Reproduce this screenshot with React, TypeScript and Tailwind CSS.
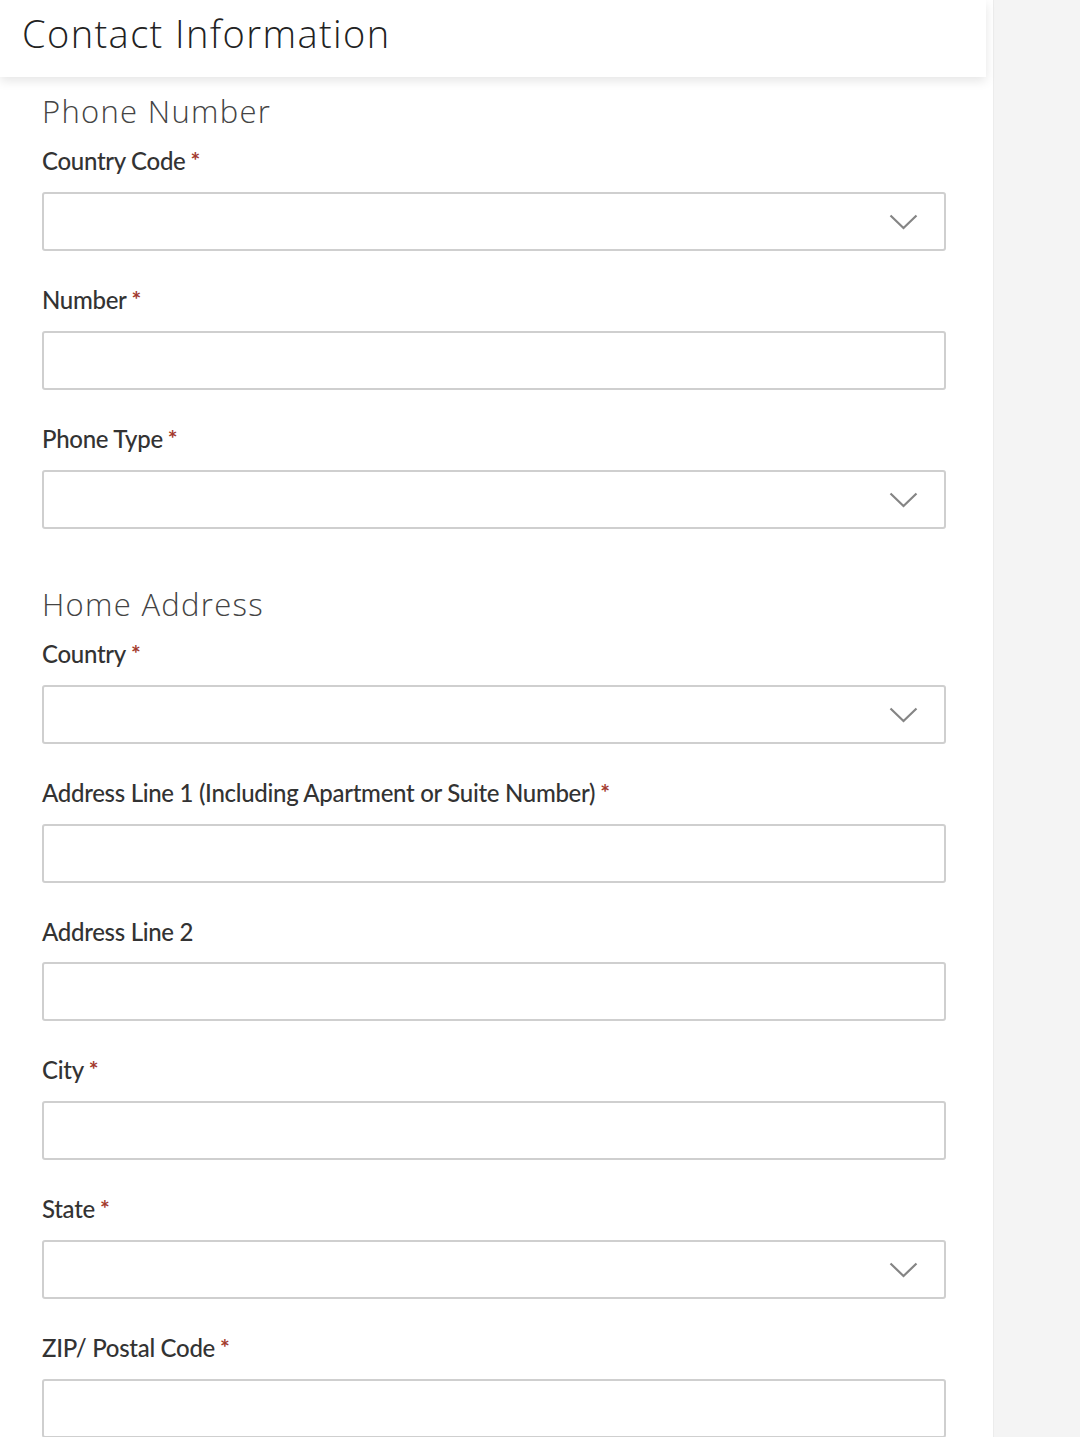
import React from "react";

const Chevron = () => (
  <svg width="29" height="16" viewBox="0 0 29 16" className="absolute right-[26px] top-1/2 -translate-y-1/2">
    <path d="M1.5 1.5 L14.5 14 L27.5 1.5" fill="none" stroke="#858585" strokeWidth="2.2" />
  </svg>
);

function Field({ label, required = true, select = false }: { label: string; required?: boolean; select?: boolean }) {
  return (
    <div className="mb-[34px]">
      <div
        className={`${required ? "h-[30px]" : "h-[29px]"} flex items-center mb-[16px] text-[24px] font-medium text-[#333] font-['Lato','Liberation_Sans',sans-serif] tracking-[-0.3px]`}
      >
        <span>{label}</span>
        {required && <span className="ml-[5px] text-[#a33a2e] text-[23px] font-bold relative top-[-1px]">*</span>}
      </div>
      <div className="relative h-[59px] w-[904px] border-2 border-[#cfcfcf] rounded-[3px] bg-white">
        {select && <Chevron />}
      </div>
    </div>
  );
}

export default function App() {
  return (
    <div className="flex w-[1080px] min-h-[1437px] bg-[#f4f4f4] overflow-hidden">
      <div className="w-[994px] bg-white border-r border-[#ececec] shrink-0">
        <div className="w-[986px] h-[77px] bg-white shadow-[0_4px_10px_rgba(0,0,0,0.10)] flex items-center pl-[22px] pb-[11px] relative z-10">
          <h1 className="text-[38px] font-light text-[#222] tracking-[1.4px] font-['Open_Sans','Liberation_Sans',sans-serif]">
            Contact Information
          </h1>
        </div>
        <div className="pl-[42px] pt-[14px]">
          <h2 className="h-[40px] flex items-center mb-[15px] text-[31px] font-light text-[#444] tracking-[1.3px] font-['Open_Sans','Liberation_Sans',sans-serif]">
            Phone Number
          </h2>
          <Field label="Country Code" select />
          <Field label="Number" />
          <Field label="Phone Type" select />
          <h2 className="h-[40px] mt-[55px] flex items-center mb-[15px] text-[31px] font-light text-[#444] tracking-[1.3px] font-['Open_Sans','Liberation_Sans',sans-serif]">
            Home Address
          </h2>
          <Field label="Country" select />
          <Field label="Address Line 1 (Including Apartment or Suite Number)" />
          <Field label="Address Line 2" required={false} />
          <Field label="City" />
          <Field label="State" select />
          <Field label="ZIP/ Postal Code" />
        </div>
      </div>
    </div>
  );
}
